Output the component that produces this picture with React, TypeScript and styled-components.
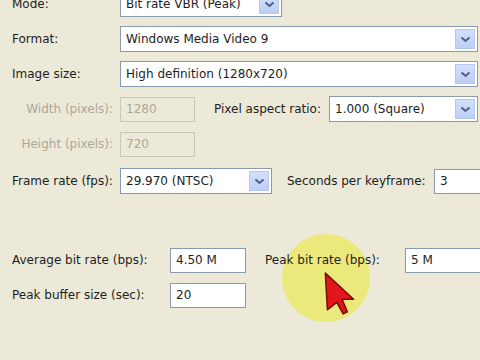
import styled, { createGlobalStyle } from "styled-components";

const GlobalStyle = createGlobalStyle`
  html, body {
    margin: 0;
    padding: 0;
    background: #ece9d8;
    overflow: hidden;
  }
  body {
    font-family: "DejaVu Sans", "Liberation Sans", sans-serif;
    font-size: 12px;
    color: #1e1e1e;
  }
`;

const Chevron = () => (
  <svg width="11" height="7" viewBox="0 0 11 7">
    <path d="M1.5 1.5 L5.5 5 L9.5 1.5" fill="none" stroke="#4a5f8a" strokeWidth="2" />
  </svg>
);

type SelectProps = { value: string; width?: number };

const Select = ({ value, width }: SelectProps) => (
  <SelectBox $width={width}>
    <SelectText>{value}</SelectText>
    <DropButton>
      <Chevron />
    </DropButton>
  </SelectBox>
);

const CursorArrow = () => (
  <svg width="34" height="46" viewBox="-2 -2 32 44">
    <path
      d="M0 0 L27 25 L16 25 L21 37 L17 39 L11 28 L2 35 Z"
      fill="#e3161b"
      stroke="#7a0d0d"
      strokeWidth="1.5"
      strokeLinejoin="round"
    />
  </svg>
);

export default function App() {
  return (
    <>
      <GlobalStyle />
      <Page>
        <Highlight />
        <Form>
          <Row>
            <Label>Mode:</Label>
            <Select value="Bit rate VBR (Peak)" width={162} />
          </Row>
          <Row>
            <Label>Format:</Label>
            <Select value="Windows Media Video 9" />
          </Row>
          <Row>
            <Label>Image size:</Label>
            <Select value="High definition (1280x720)" />
          </Row>
          <Row>
            <Label $disabled $right>Width (pixels):</Label>
            <TextBox $width={75} $disabled>1280</TextBox>
            <InlineLabel $gap={19}>Pixel aspect ratio:</InlineLabel>
            <Select value="1.000 (Square)" />
          </Row>
          <Row>
            <Label $disabled $right>Height (pixels):</Label>
            <TextBox $width={75} $disabled>720</TextBox>
          </Row>
          <Row $top={2}>
            <Label>Frame rate (fps):</Label>
            <Select value="29.970 (NTSC)" width={152} />
            <InlineLabel $gap={15} $width={147}>Seconds per keyframe:</InlineLabel>
            <TextBox $width={60}>3</TextBox>
          </Row>
          <Row $top={44}>
            <Label $width={158}>Average bit rate (bps):</Label>
            <TextBox $width={76}>4.50 M</TextBox>
            <InlineLabel $gap={19} $width={140}>Peak bit rate (bps):</InlineLabel>
            <TextBox $width={80}>5 M</TextBox>
          </Row>
          <Row>
            <Label $width={158}>Peak buffer size (sec):</Label>
            <TextBox $width={76}>20</TextBox>
          </Row>
        </Form>
        <Pointer>
          <CursorArrow />
        </Pointer>
      </Page>
    </>
  );
}

const Page = styled.div`
  position: relative;
  width: 480px;
  height: 360px;
  overflow: hidden;
`;

const Form = styled.div`
  position: relative;
  z-index: 1;
  display: flex;
  flex-direction: column;
  gap: 9px;
  margin-top: -9px;
  padding-left: 12px;
  padding-right: 2px;
`;

const Row = styled.div<{ $top?: number }>`
  display: flex;
  align-items: center;
  height: 26px;
  margin-top: ${({ $top }) => $top ?? 0}px;
  white-space: nowrap;
`;

const Label = styled.div<{ $width?: number; $disabled?: boolean; $right?: boolean }>`
  width: ${({ $width }) => $width ?? 108}px;
  flex-shrink: 0;
  color: ${({ $disabled }) => ($disabled ? "#aca899" : "#1e1e1e")};
  text-align: ${({ $right }) => ($right ? "right" : "left")};
  padding-right: ${({ $right }) => ($right ? 7 : 0)}px;
  box-sizing: border-box;
`;

const InlineLabel = styled.div<{ $gap: number; $width?: number }>`
  margin-left: ${({ $gap }) => $gap}px;
  width: ${({ $width }) => ($width ? `${$width}px` : "auto")};
  padding-right: 8px;
  box-sizing: border-box;
  flex-shrink: 0;
`;

const SelectBox = styled.div<{ $width?: number }>`
  display: flex;
  align-items: center;
  box-sizing: border-box;
  height: 26px;
  ${({ $width }) => ($width ? `width: ${$width}px; flex-shrink: 0;` : "flex: 1;")}
  background: #fff;
  border: 1px solid #8a9aae;
  padding: 2px;
`;

const SelectText = styled.div`
  flex: 1;
  padding-left: 3px;
  overflow: hidden;
`;

const DropButton = styled.div`
  width: 20px;
  height: 20px;
  display: flex;
  align-items: center;
  justify-content: center;
  background: linear-gradient(#d4e0fb, #bccef5);
  border: 1px solid #b6c7ec;
  box-sizing: border-box;
`;

const TextBox = styled.div<{ $width: number; $disabled?: boolean }>`
  width: ${({ $width }) => $width}px;
  flex-shrink: 0;
  height: 25px;
  box-sizing: border-box;
  display: flex;
  align-items: center;
  padding-left: 5px;
  background: ${({ $disabled }) => ($disabled ? "#ece9d8" : "#fff")};
  border: 1px solid ${({ $disabled }) => ($disabled ? "#c9c7ba" : "#8a9aae")};
  color: ${({ $disabled }) => ($disabled ? "#aca899" : "#1e1e1e")};
`;

const Highlight = styled.div`
  position: absolute;
  z-index: 0;
  left: 282px;
  top: 234px;
  width: 88px;
  height: 88px;
  border-radius: 50%;
  background: rgba(236, 234, 50, 0.55);
  pointer-events: none;
`;

const Pointer = styled.div`
  position: absolute;
  z-index: 2;
  left: 323px;
  top: 271px;
  line-height: 0;
`;
